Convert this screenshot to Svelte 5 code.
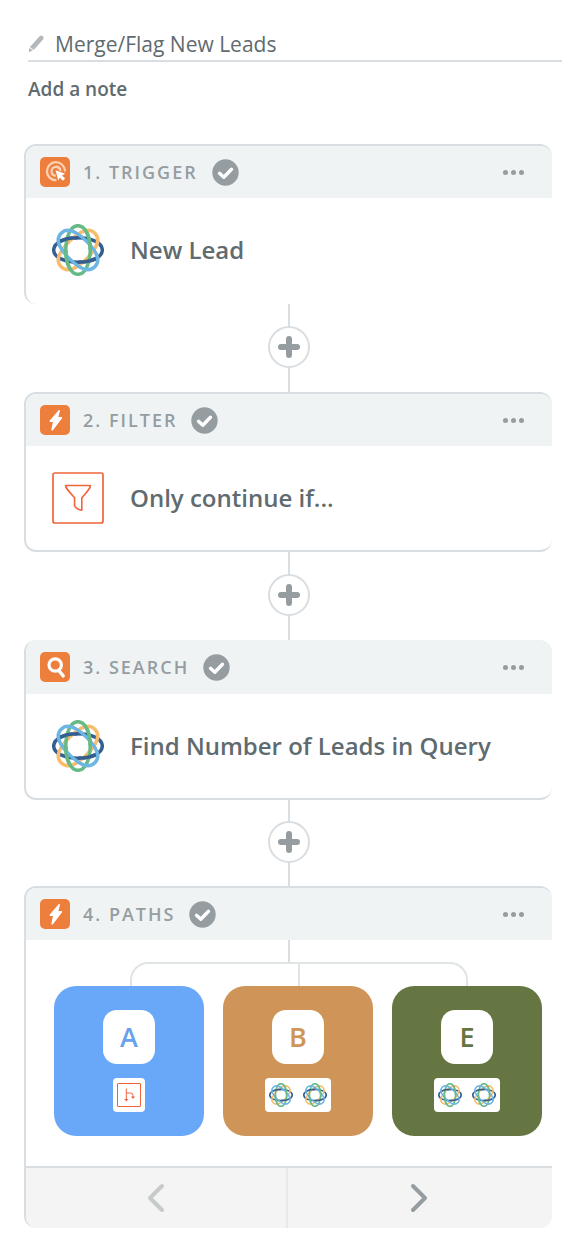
<script>
  let zapName = $state('Merge/Flag New Leads');

  const steps = [
    { label: '1. Trigger', kind: 'trigger', title: 'New Lead', app: 'close', edge: 'open-bottom' },
    { label: '2. Filter', kind: 'bolt', title: 'Only continue if...', app: 'filter', edge: '' },
    { label: '3. Search', kind: 'search', title: 'Find Number of Leads in Query', app: 'close', edge: 'open-top' }
  ];

  const paths = [
    { letter: 'A', tone: 'blue', apps: ['paths'] },
    { letter: 'B', tone: 'tan', apps: ['close', 'close'] },
    { letter: 'E', tone: 'olive', apps: ['close', 'close'] }
  ];

  // Woven logo: pointed loops on the axes, blunter loops on the diagonals.
  const loop = 'M-24.300 0C-24.300-7.500-13-12.200 0-12.200S24.300-7.500 24.300 0 13 12.200 0 12.200-24.300 7.500-24.300 0z';
  const wide = 'M-23.800 0C-23.800-9.500-13-12.200 0-12.200S23.800-9.500 23.800 0 13 12.200 0 12.200-23.800 9.500-23.800 0z';
</script>

{#snippet kindIcon(kind)}
  <svg class="kind" viewBox="0 0 30 30" aria-hidden="true">
    <rect width="30" height="30" rx="5" fill="#ee7e3b" />
    {#if kind === 'trigger'}
      <g fill="none" stroke="#fbd0b5" stroke-width="2.3" stroke-linecap="round">
        <path d="M15.500 23.200A9 9 0 1 1 24.900 13.500" />
        <path d="M14.800 18.600A4.500 4.500 0 1 1 20.400 13.200" />
      </g>
      <path d="M15.600 13.200l9.600 3.500-3.200 1.800 3.100 3.100-2.200 2.200-3.200-3.200-1.500 3z" fill="#fff" />
    {:else if kind === 'bolt'}
      <path d="M18.6 5.2c.7-.6 1.5-.2 1.3.7L18.4 12h2.8c.9 0 1.2.7.7 1.4l-9 11.8c-.7.9-1.7.4-1.5-.6l1.5-7.6H10.400c-.9 0-1.2-.8-.6-1.500z" fill="#fff" />
    {:else}
      <circle cx="15.200" cy="13" r="6.200" fill="none" stroke="#fff" stroke-width="3.200" />
      <path d="M18.800 18.500l4.400 5.400" stroke="#fff" stroke-width="3.400" stroke-linecap="round" />
    {/if}
  </svg>
{/snippet}

{#snippet check()}
  <svg class="check" viewBox="0 0 27 27" role="img" aria-label="Complete">
    <circle cx="13.500" cy="13.500" r="13.200" fill="#959da1" />
    <path d="M7.500 14.300l4.300 3.900 7.700-8" fill="none" stroke="#fff" stroke-width="3.400" stroke-linecap="round" stroke-linejoin="round" />
  </svg>
{/snippet}

{#snippet appIcon(app)}
  {#if app === 'close'}
    <svg class="app" viewBox="-26 -26 52 52" aria-hidden="true">
      <g fill="none" stroke-width="3.500">
        <path d={loop} stroke="#365f91" />
        <path d={wide} stroke="#f7bd6d" transform="rotate(-45)" />
        <path d={loop} stroke="#66ba85" transform="rotate(90)" />
        <path d={wide} stroke="#6db5e2" transform="rotate(45)" />
        <path d="M-17.500-8.900C-13-11.200-7-12.200 0-12.200" stroke="#365f91" />
        <path d="M17.500 8.900C13 11.200 7 12.200 0 12.200" stroke="#365f91" />
        <path d="M-17.500-8.900C-13-11.200-7-12.200 0-12.200" stroke="#66ba85" transform="rotate(90)" />
        <path d="M17.500 8.900C13 11.200 7 12.200 0 12.200" stroke="#66ba85" transform="rotate(90)" />
      </g>
    </svg>
  {:else if app === 'filter'}
    <svg class="app" viewBox="0 0 52 52" fill="none" stroke="#f0643a" aria-hidden="true">
      <rect x="1" y="1" width="50" height="50" rx="2" stroke-width="1.700" />
      <path d="M13.600 13.500h24.800c0 2.500-1.500 4.500-8.600 12.300v12.400c-2.500-.3-6.500-2.200-7.200-4.400v-8C15.500 18 13.600 16 13.600 13.500z" stroke-width="1.600" stroke-linejoin="round" />
    </svg>
  {:else}
    <svg class="app" viewBox="0 0 24 24" fill="none" stroke="#f0643a" aria-hidden="true">
      <rect x=".5" y=".5" width="23" height="23" rx=".5" />
      <path d="M9.300 5.500v11M9.300 10h4.200q2.500 0 2.500 2.500v1.500" />
      <path d="M7.200 16h4.200l-2.100 2.600zM13.900 13.500h4.200L16 16.100z" fill="#f0643a" stroke="none" />
    </svg>
  {/if}
{/snippet}

{#snippet header(label, kind)}
  <header class="head">
    {@render kindIcon(kind)}
    <h2>{label}</h2>
    {@render check()}
    <button class="more" aria-label="More options for {label}">
      <span></span><span></span><span></span>
    </button>
  </header>
{/snippet}

<main>
  <div class="intro">
    <label class="name">
      <svg viewBox="0 0 17 18" aria-label="Zap name" role="img">
        <path d="M11.600 1.300q1.500-1.400 3.200-.1 1.500 1.500.2 3.200L5.700 15 1.900 12z" fill="#b3b9bb" />
        <path d="M1.400 12.800l3.400 2.800L.7 17.300z" fill="#b3b9bb" />
      </svg>
      <input type="text" bind:value={zapName} />
    </label>
    <button class="note">Add a note</button>
  </div>

  {#each steps as step, i}
    <section class="card {step.edge}">
      {@render header(step.label, step.kind)}
      <div class="body">
        {@render appIcon(step.app)}
        <h3>{step.title}</h3>
      </div>
    </section>
    <div class="link" class:last={i === steps.length - 1}>
      <button class="add" aria-label="Add a step">
        <svg viewBox="0 0 22 22" aria-hidden="true">
          <path d="M11 3v16M3 11h16" stroke="#959da1" stroke-width="6" stroke-linecap="round" />
        </svg>
      </button>
    </div>
  {/each}

  <section class="card">
    {@render header('4. Paths', 'bolt')}
    <div class="paths">
      <div class="stem"></div>
      <div class="branches">
        <div class="bracket"></div>
      </div>
      <div class="tiles">
        {#each paths as path}
          <button class="tile {path.tone}">
            <span class="letter">{path.letter}</span>
            <span class="apps">
              {#each path.apps as app}
                {@render appIcon(app)}
              {/each}
            </span>
          </button>
        {/each}
      </div>
    </div>
    <nav>
      <button aria-label="Previous paths" disabled>
        <svg viewBox="0 0 18 30" aria-hidden="true"><path d="M15 3L3 15l12 12" /></svg>
      </button>
      <button aria-label="Next paths">
        <svg viewBox="0 0 18 30" aria-hidden="true"><path d="M3 3l12 12L3 27" /></svg>
      </button>
    </nav>
  </section>
</main>

<style>
  :global(body) {
    margin: 0;
    background: #fff;
  }
  main {
    padding: 28px 36px 26px 24px;
    font-family: 'Open Sans', 'Noto Sans', sans-serif;
    color: #5f6b6f;
  }
  button,
  input {
    margin: 0;
    padding: 0;
    border: 0;
    background: none;
    font: inherit;
    color: inherit;
  }
  button {
    cursor: pointer;
  }
  svg {
    display: block;
    flex: none;
  }
  h2,
  h3 {
    margin: 0;
    font-weight: 600;
  }

  .intro {
    display: flex;
    flex-direction: column;
    align-items: flex-start;
    gap: 14px;
    height: 116px;
    margin: 0 -10px 0 4px;
  }
  .name {
    display: flex;
    align-items: center;
    gap: 10px;
    align-self: stretch;
    border-bottom: 2px solid #d9dee2;
  }
  .name svg {
    width: 17px;
    height: 18px;
  }
  .name input {
    flex: 1;
    min-width: 0;
    height: 32px;
    font-size: 21px;
    outline: none;
  }
  .note {
    font-size: 19px;
    line-height: 26px;
    font-weight: 600;
  }

  .card {
    overflow: hidden;
    border: 2px solid #d9dee2;
    border-right-width: 0;
    border-radius: 12px;
  }
  .card.open-bottom,
  .card:last-child {
    border-bottom-width: 0;
  }
  .card.open-top {
    border-top-width: 0;
  }
  .head {
    display: flex;
    align-items: center;
    height: 52px;
    padding: 0 28px 0 14px;
    background: #eff3f4;
  }
  .open-top .head {
    height: 54px;
  }
  .kind {
    width: 30px;
    height: 30px;
  }
  h2 {
    margin: 0 14px 0 13px;
    font-size: 18px;
    letter-spacing: 2px;
    text-transform: uppercase;
    color: #959da1;
  }
  .check {
    width: 27px;
    height: 27px;
  }
  .more {
    display: flex;
    gap: 3px;
    margin-left: auto;
    padding: 12px 0;
  }
  .more span {
    width: 5px;
    height: 5px;
    border-radius: 50%;
    background: #959da1;
  }
  .body {
    display: flex;
    align-items: center;
    gap: 26px;
    height: 104px;
    padding: 0 26px;
  }
  .open-bottom .body {
    padding-bottom: 2px;
  }
  .body .app {
    width: 52px;
    height: 52px;
  }
  h3 {
    font-size: 24px;
    line-height: 32px;
  }

  .link {
    display: flex;
    justify-content: center;
    align-items: center;
    height: 86px;
    padding: 0 0 2px 2px;
    background: linear-gradient(#d9dee2, #d9dee2) calc(50% + 1px) 0 / 2px 100% no-repeat;
  }
  .link.last {
    height: 84px;
  }
  .add {
    display: grid;
    place-items: center;
    box-sizing: border-box;
    width: 42px;
    height: 42px;
    border: 2px solid #d9dee2;
    border-radius: 50%;
    background: #fff;
  }
  .add svg {
    width: 22px;
    height: 22px;
  }

  .paths {
    padding-bottom: 30px;
  }
  .stem {
    width: 2px;
    height: 22px;
    margin: 0 auto;
    background: #d9dee2;
  }
  .branches,
  .tiles {
    margin: 0 10px 0 28px;
  }
  .bracket {
    box-sizing: border-box;
    height: 24px;
    margin: 0 calc((100% - 38px) / 6 - 1px) 0 calc((100% - 38px) / 6 + 1px);
    border: solid #dfe4e5;
    border-width: 2px 2px 0;
    border-radius: 18px 18px 0 0;
    background: linear-gradient(#dfe4e5, #dfe4e5) center / 2px 100% no-repeat;
  }
  .tiles {
    display: grid;
    grid-template-columns: repeat(3, 1fr);
    gap: 19px;
  }
  .tile {
    display: flex;
    flex-direction: column;
    align-items: center;
    gap: 14px;
    height: 150px;
    padding-top: 24px;
    border-radius: 22px;
  }
  .blue {
    background: #69a8f8;
    color: #69a2ec;
  }
  .tan {
    background: #cf9558;
    color: #cf9558;
  }
  .olive {
    background: #657642;
    color: #657642;
  }
  .letter {
    width: 52px;
    border-radius: 14px;
    background: #fff;
    font-size: 27px;
    line-height: 54px;
    font-weight: 600;
  }
  .apps {
    display: flex;
    align-items: center;
    gap: 10px;
    height: 34px;
    padding: 0 4px;
    border-radius: 4px;
    background: #fff;
  }
  .apps .app {
    width: 24px;
    height: 24px;
  }

  nav {
    display: grid;
    grid-template-columns: 1fr 1fr;
    padding-right: 2px;
    border-top: 2px solid #d9dee2;
    background: #f4f4f4;
  }
  nav button {
    display: grid;
    place-items: center;
    height: 60px;
    color: #959da1;
  }
  nav button:disabled {
    border-right: 2px solid #e6e8e9;
    color: #c6cacb;
    cursor: default;
  }
  nav svg {
    width: 18px;
    height: 30px;
    fill: none;
    stroke: currentColor;
    stroke-width: 4px;
    stroke-linecap: round;
    stroke-linejoin: round;
  }
</style>
